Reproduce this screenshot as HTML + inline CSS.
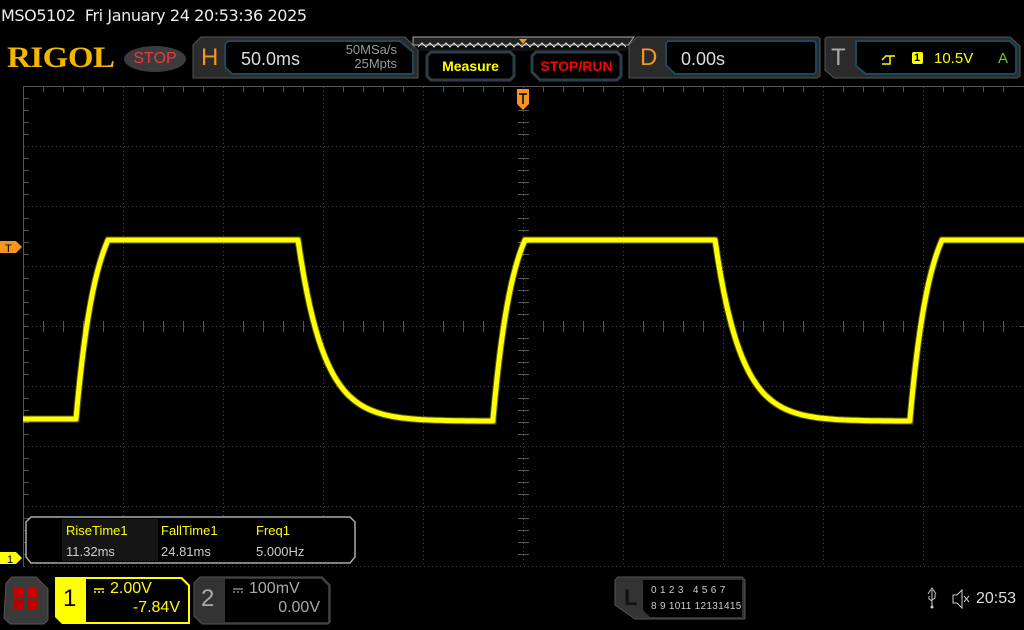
<!DOCTYPE html>
<html><head><meta charset="utf-8"><style>
*{margin:0;padding:0;box-sizing:border-box}
body{width:1024px;height:630px;background:#000;overflow:hidden;position:relative;font-family:"Liberation Sans","DejaVu Sans",sans-serif;color:#ddd}
.a{position:absolute}
</style></head><body>
<div class="a" style="left:1px;top:6px;font-size:16px;color:#eee;font-family:'DejaVu Sans',sans-serif;letter-spacing:-0.4px">MSO5102&nbsp; Fri January 24 20:53:36 2025</div>
<div class="a" style="left:7px;top:40px;font-family:'Liberation Serif',serif;font-weight:bold;font-size:33px;color:#f2b705;letter-spacing:-0.5px;transform:scaleY(0.9)">RIGOL</div>
<div class="a" style="left:124px;top:46px;width:62px;height:26px;border-radius:50%;background:#3c3c3c;color:#ee3a3a;font-size:16px;text-align:center;line-height:26px">STOP</div>
<svg class="a" style="left:0;top:0" width="1024" height="90">
 <path d="M193 45 L201 37 L405 37 L418 50 L418 78 L193 78Z" fill="#2b2b2b" stroke="#555"/>
 <path d="M228 41 L400 41 L413 52 L413 74 L232 74 L225 67 L225 44Z" fill="#000" stroke="#1a4a5a" stroke-width="2"/>
 <path d="M413 37 L634 37 L628 45 L413 45Z" fill="#222" stroke="#aaa"/>
 <path d="M415 47 L630 47 L626 51 L419 51Z" fill="#111"/>
 <polyline points="418,47 422,43 426,47 430,43 434,47 438,43 442,47 446,43 450,47 454,43 458,47 462,43 466,47 470,43 474,47 478,43 482,47 486,43 490,47 494,43 498,47 502,43 506,47 510,43 514,47 518,43 522,47 526,43 530,47 534,43 538,47 542,43 546,47 550,43 554,47 558,43 562,47 566,43 570,47 574,43 578,47 582,43 586,47 590,43 594,47 598,43 602,47 606,43 610,47 614,43 618,47 622,43 626,47" fill="none" stroke="#ddd" stroke-width="1"/>
 <path d="M519 39 L527 39 L523 44Z" fill="#f90"/>
 <path d="M431 52 L510 52 L514 56 L514 76 L510 80 L431 80 L427 76 L427 56Z" fill="#000" stroke="#2a3f4a" stroke-width="3"/>
 <path d="M536 52 L617 52 L621 56 L621 76 L617 80 L540 80 L532 72 L532 56Z" fill="#000" stroke="#2a3f4a" stroke-width="3"/>
 <path d="M629 45 L637 37 L818 37 L820 39 L820 76 L817 78 L629 78Z" fill="#2b2b2b" stroke="#555"/>
 <path d="M668 41 L814 41 L816 43 L816 72 L814 74 L675 74 L666 65 L666 43Z" fill="#000" stroke="#1a4a5a" stroke-width="2"/>
 <path d="M825 39 L827 37 L1010 37 L1020 46 L1020 76 L1017 78 L834 78 L825 70Z" fill="#2b2b2b" stroke="#555"/>
 <path d="M856 41 L1010 41 L1016 47 L1016 72 L1014 74 L866 74 L856 66Z" fill="#000" stroke="#1a4a5a" stroke-width="2"/>
 <path d="M882 64 L890 64 L890 56 M885 56 L895 56 M882 60 L886 56" stroke="#ff0" stroke-width="1.5" fill="none"/>
 <rect x="912" y="52" width="11" height="12" rx="2" fill="#ff0"/>
</svg>
<div class="a" style="left:201px;top:44px;font-size:24px;color:#f7941d">H</div>
<div class="a" style="left:241px;top:49px;font-size:18px;color:#ddd">50.0ms</div>
<div class="a" style="left:332px;top:43px;font-size:13px;color:#999;text-align:right;width:65px;line-height:14px">50MSa/s<br>25Mpts</div>
<div class="a" style="left:427px;top:58px;width:87px;text-align:center;font-size:14px;font-weight:bold;color:#ff0">Measure</div>
<div class="a" style="left:532px;top:58px;width:89px;text-align:center;font-size:14px;font-weight:bold;color:#f00">STOP/RUN</div>
<div class="a" style="left:640px;top:44px;font-size:24px;color:#f7941d">D</div>
<div class="a" style="left:681px;top:49px;font-size:18px;color:#ddd">0.00s</div>
<div class="a" style="left:831px;top:44px;font-size:24px;color:#aaa">T</div>
<div class="a" style="left:914px;top:52px;font-size:11px;color:#000;font-weight:bold">1</div>
<div class="a" style="left:934px;top:50px;font-size:15px;color:#ff0">10.5V</div>
<div class="a" style="left:998px;top:50px;font-size:15px;color:#6c3">A</div>

<svg class="a" style="left:0;top:0" width="1024" height="630" id="g">
 <g stroke="#555" stroke-width="1" fill="none">
  <path d="M23.5 86 V567 M23 86.5 H1024"/>
 </g>
 <g stroke="#444" stroke-dasharray="1 3" stroke-width="1">
  <path d="M123.5 87V567 M223.5 87V567 M323.5 87V567 M423.5 87V567 M523.5 87V567 M623.5 87V567 M723.5 87V567 M823.5 87V567 M923.5 87V567"/>
  <path d="M24 146.5H1024 M24 206.5H1024 M24 266.5H1024 M24 326.5H1024 M24 386.5H1024 M24 446.5H1024 M24 506.5H1024 M24 566.5H1024"/>
 </g>
 <g id="ticks" stroke="#555"></g>
 <path id="w2" fill="none" stroke="#ffff00" stroke-width="7" opacity="0.35"/>
 <path id="w" fill="none" stroke="#ffff00" stroke-width="5" stroke-linejoin="round"/>
 <path d="M0 241 H16 L22 247 L16 253 H0Z" fill="#f7941d"/>
 <text x="5" y="252" font-size="11" fill="#000" font-family="Liberation Sans">T</text>
 <path d="M0 552 H16 L22 558 L16 564 H0Z" fill="#ff0"/>
 <text x="7" y="563" font-size="11" fill="#000" font-family="Liberation Sans">1</text>
 <path d="M517 89 H529 V104 L523 110 L517 104Z" fill="#f7941d"/>
 <path d="M519 94 H527 M523 94 V104" stroke="#000" stroke-width="1.5"/>
 <path d="M31 517 H350 L355 522 V557 L350 563 H31 L26 557 V522Z" fill="#000" stroke="#aaa" stroke-width="1.5"/>
 <rect x="62" y="519" width="96" height="42" fill="#151515"/>
 <path d="M6 583 L12 577 H36 L48 589 V620 L44 624 H10 L4 618Z" fill="#3a3a3a" stroke="#555"/>
 <rect x="14" y="587" width="10" height="10" fill="#c00"/><rect x="27" y="587" width="10" height="10" fill="#c00"/>
 <rect x="14" y="600" width="10" height="10" fill="#b00"/><rect x="27" y="600" width="10" height="10" fill="#b00"/>
 <path d="M55 577 H182 L190 585 V624 H62 L55 617Z" fill="#ff0"/>
 <path d="M86 579 H181 L188 586 V622 H86Z" fill="#000"/>
 <path d="M94 589 H104 M94 592 H96 M98 592 H100 M102 592 H104" stroke="#ff0" stroke-width="1.5"/>
 <path d="M194 583 L200 577 H322 L330 585 V622 L328 624 H202 L194 616Z" fill="#333" stroke="#555"/>
 <path d="M225 579 H321 L328 586 V622 H225Z" fill="#000"/>
 <path d="M233 589 H243 M233 592 H235 M237 592 H239 M241 592 H243" stroke="#888" stroke-width="1.5"/>
 <path d="M615 580 L618 577 H742 L745 580 V619 H635 L615 605Z" fill="#333" stroke="#555"/>
 <path d="M643 580 H742 V617 H650 L643 610Z" fill="#000"/>
 <path d="M932 590 V606 M928 594 L932 588 L936 594 M929 596 V599 L932 601 M935 594 V598 L932 600" stroke="#ccc" stroke-width="1" fill="none"/>
 <circle cx="932" cy="607" r="1.5" fill="#ccc"/>
 <path d="M953 595 H957 L962 590 V608 L957 603 H953Z" fill="none" stroke="#ccc"/>
 <path d="M964 596 L969 602 M969 596 L964 602" stroke="#ccc"/>
</svg>
<div class="a" style="left:66px;top:523px;font-size:13px;color:#ff0">RiseTime1</div>
<div class="a" style="left:161px;top:523px;font-size:13px;color:#ff0">FallTime1</div>
<div class="a" style="left:256px;top:523px;font-size:13px;color:#ff0">Freq1</div>
<div class="a" style="left:66px;top:544px;font-size:13px;color:#ccc">11.32ms</div>
<div class="a" style="left:161px;top:544px;font-size:13px;color:#ccc">24.81ms</div>
<div class="a" style="left:256px;top:544px;font-size:13px;color:#ccc">5.000Hz</div>
<div class="a" style="left:63px;top:585px;font-size:24px;color:#000">1</div>
<div class="a" style="left:110px;top:580px;font-size:16px;color:#ff0">2.00V</div>
<div class="a" style="left:128px;top:599px;font-size:16px;color:#ff0;width:52px;text-align:right">-7.84V</div>
<div class="a" style="left:201px;top:585px;font-size:24px;color:#aaa">2</div>
<div class="a" style="left:249px;top:580px;font-size:16px;color:#aaa">100mV</div>
<div class="a" style="left:260px;top:599px;font-size:16px;color:#aaa;width:60px;text-align:right">0.00V</div>
<div class="a" style="left:624px;top:585px;font-size:22px;font-weight:bold;color:#111">L</div>
<div class="a" style="left:651px;top:583px;font-size:10px;color:#ccc;line-height:16px;letter-spacing:0.3px">0 1 2 3&nbsp;&nbsp; 4 5 6 7<br>8 9 1011 12131415</div>
<div class="a" style="left:976px;top:590px;font-size:16px;color:#ddd">20:53</div>
<script>
var t='';
for(var x=43;x<1024;x+=20){ if((x-23)%100) t+='M'+(x+.5)+' 87v5M'+(x+.5)+' 321v11'; }
for(var y=98;y<567;y+=12){ if((y-86)%60) t+='M24 '+(y+.5)+'h5M518 '+(y+.5)+'h11'; }
t+='M24 326.5h5M1019 326.5h5';
document.getElementById('ticks').innerHTML='<path d="'+t+'"/>';
var H=240,L=419,d='';
function seg(x0){
 var s='';
 for(var i=0;i<=32;i+=2){var f=(1-Math.exp(-i/20))/(1-Math.exp(-1.6));s+=' L'+(x0+i)+' '+(L-(L-H)*f).toFixed(1);}
 s+=' L'+(x0+222)+' '+H;
 for(var i=0;i<=195;i+=3){var f=1-Math.exp(-i/26);s+=' L'+(x0+222+i)+' '+(H+(L-H)*f*1.012).toFixed(1);}
 return s;
}
d='M23 '+L+' L76 '+L+seg(76)+' L493 '+(L-1)+seg(493)+' L910 '+(L-1)+seg(910);
document.getElementById('w').setAttribute('d',d);
document.getElementById('w2').setAttribute('d',d);
</script>
</body></html>
